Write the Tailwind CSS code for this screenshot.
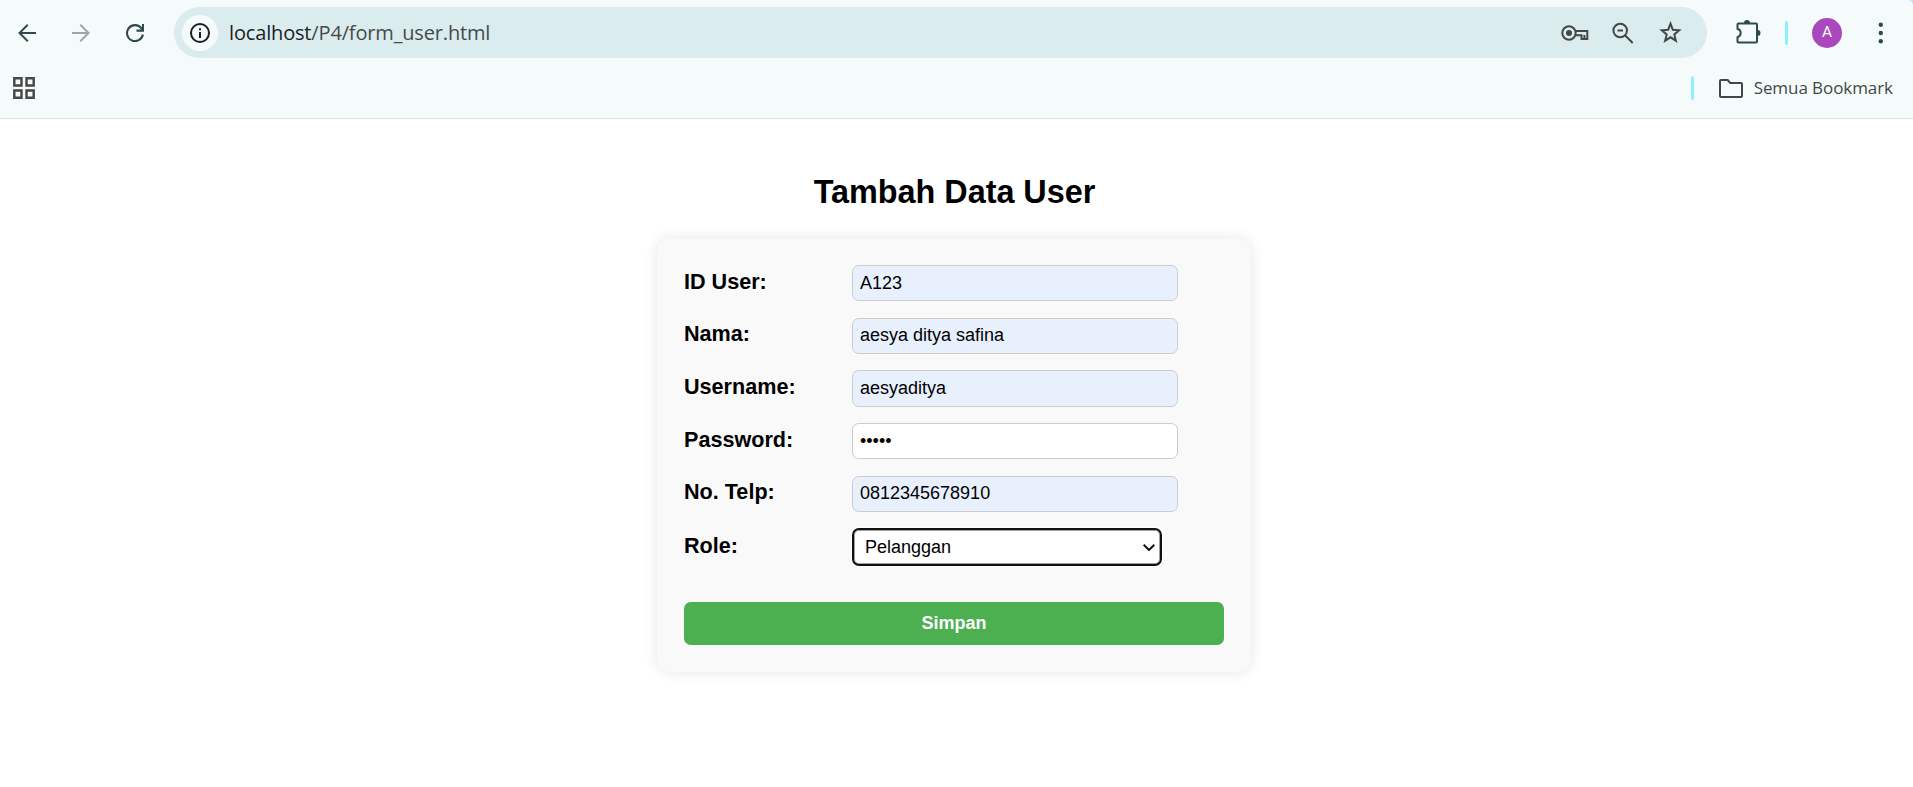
<!DOCTYPE html>
<html lang="id">
<head>
<meta charset="utf-8">
<title>Tambah Data User</title>
<script src="https://cdn.jsdelivr.net/npm/@tailwindcss/browser@4"></script>
</head>
<body class="w-[1913px] h-[787px] overflow-hidden bg-white font-['Liberation_Sans',Arial,sans-serif] text-black">
<header class="h-[119px] bg-[#f5fbfb] border-b border-[#d3e3e6] font-['Open_Sans','Segoe_UI',sans-serif] relative">
  <div class="absolute right-0 top-0 size-[5px] bg-[radial-gradient(circle_at_0_100%,#f5fbfb_4.5px,#c5e4e6_5px)]"></div>
  <div class="flex items-center h-[65px] text-[#2f4a4f]">
    <svg class="ml-[18px] size-[18px] shrink-0" viewBox="0 0 18 18" fill="none" stroke="currentColor" stroke-width="2"><path d="M18 9H1.5M9.800 .8L1.500 9l8.300 8.200"/></svg>
    <svg class="ml-9 size-[18px] shrink-0 text-[#9fa5a6]" viewBox="0 0 18 18" fill="none" stroke="currentColor" stroke-width="2"><path d="M0 9h16.5M8.300 .8L16.500 9l-8.200 8.200"/></svg>
    <svg class="ml-9 size-[18px] shrink-0" viewBox="0 0 18 18" fill="none" stroke="currentColor" stroke-width="2.100"><path d="M16.900 10.500A8 8 0 1 1 15.500 4.400L16.800 6M17 0v6.600H10.500"/></svg>
    <div class="ml-[30px] flex items-center w-[1533px] h-[51px] rounded-full bg-[#daecee] shrink-0">
      <span class="ml-2 size-9 rounded-full bg-[#f5fbfb] flex items-center justify-center text-[#1b1e1f]">
        <svg class="size-5" viewBox="0 0 20 20" fill="none" stroke="currentColor" stroke-width="2"><circle cx="10" cy="10" r="9"/><path d="M10 9v6M10 5.2v2"/></svg>
      </span>
      <span class="ml-[11px] text-[20px] leading-none tracking-[-0.16px] text-[#444b4d]"><span class="text-[#1b1e1f]">localhost</span>/P4/form_user.html</span>
      <span class="ml-auto flex items-center text-[#444746] mr-[24px]">
        <svg class="w-[28px] h-[16px]" viewBox="0 0 28 16" fill="none" stroke="currentColor" stroke-width="2"><circle cx="8" cy="8" r="6.7"/><circle cx="8" cy="8" r="3" fill="currentColor" stroke="none"/><path d="M14.200 6H26.300V14H20.500V10.300H14.200M23.400 10v3.500"/></svg>
        <svg class="ml-[23px] size-[22px]" viewBox="0 0 22 22" fill="none" stroke="currentColor" stroke-width="2"><circle cx="8.200" cy="8.500" r="6.8"/><path d="M13 13.300L20.700 21M5.500 8.500h5.500"/></svg>
        <svg class="ml-[25px] mr-px size-[23px]" viewBox="0 0 23 23" fill="none" stroke="currentColor" stroke-width="2"><path d="M11.5 2.700l2.300 6 6.400.5-4.900 4.200 1.600 6.300-5.400-3.400-5.400 3.400 1.600-6.300L2.800 9.200l6.400-.5z"/></svg>
      </span>
    </div>
    <svg class="ml-[28px] w-[26px] h-[25px] shrink-0" viewBox="0 0 26 25" fill="none" stroke="currentColor" stroke-width="2"><path d="M4 3.500h17a1 1 0 0 1 1 1v17a1 1 0 0 1-1 1H3.500a1 1 0 0 1-1-1V17.200C4.500 16.500 5.700 15 5.700 13S4.500 9.500 2.500 8.800V4.500a1 1 0 0 1 1-1z"/><path d="M9 3a3 3 0 0 1 6 0zM22.500 10a3 3 0 0 1 0 6z" fill="currentColor" stroke="none"/></svg>
    <span class="ml-[24px] w-[3px] h-6 rounded-full bg-[#8ef0fe]"></span>
    <span class="ml-[24px] size-[30px] rounded-full bg-[#ab47bc] text-white text-[15.500px] leading-none flex items-center justify-center font-[Roboto,sans-serif]">A</span>
    <svg class="ml-[36px] w-[5px] h-[22px]" viewBox="0 0 5 22" fill="currentColor"><circle cx="2.800" cy="2.700" r="2.200"/><circle cx="2.800" cy="11" r="2.200"/><circle cx="2.800" cy="19.300" r="2.200"/></svg>
  </div>
  <div class="flex items-center h-[46px] text-[#444746]">
    <svg class="ml-[13px] size-[22px]" viewBox="0 0 22 22" fill="none" stroke="currentColor" stroke-width="2.400"><path d="M1.300 1.300h7.200v7.200H1.300zM13.500 1.300h7.200v7.200h-7.200zM1.300 13.500h7.200v7.200H1.300zM13.500 13.500h7.200v7.200h-7.200z"/></svg>
    <span class="ml-auto w-[3px] h-6 rounded-full bg-[#8ef0fe]"></span>
    <svg class="ml-[25px] w-6 h-[19px]" viewBox="0 0 24 19" fill="none" stroke="currentColor" stroke-width="2"><path d="M2 1h6.700l2.500 3H22a1 1 0 0 1 1 1v12a1 1 0 0 1-1 1H2a1 1 0 0 1-1-1V2a1 1 0 0 1 1-1z"/></svg>
    <span class="ml-[11px] mr-[20px] mb-px text-[17px] tracking-[-0.07px] leading-none whitespace-nowrap">Semua Bookmark</span>
  </div>
</header>
<main class="flex flex-col items-center pr-[5px]">
  <h2 class="mt-[55px] ml-px text-[32.4px] leading-[37px] tracking-[-0.03px] font-bold">Tambah Data User</h2>
  <form class="mt-[27px] w-[594px] h-[434px] rounded-[13.5px] bg-[#f9f9f9] shadow-[0_0_13.5px_rgba(0,0,0,0.1)] px-[27px] pt-[27px]">
    <div class="flex h-[53px]"><label class="w-[168px] text-[21.6px] leading-[24px] pt-[5px] font-bold">ID User:</label><input class="w-[326px] h-9 rounded-[6.750px] border border-[#ccc] bg-[#e8f0fe] px-[7px] text-[18px]" value="A123"></div>
    <div class="flex h-[52px]"><label class="w-[168px] text-[21.6px] leading-[24px] pt-[4px] font-bold">Nama:</label><input class="w-[326px] h-9 rounded-[6.750px] border border-[#ccc] bg-[#e8f0fe] px-[7px] pb-[2px] text-[18px]" value="aesya ditya safina"></div>
    <div class="flex h-[53px]"><label class="w-[168px] text-[21.6px] leading-[24px] pt-[5px] font-bold">Username:</label><input class="w-[326px] h-[37px] rounded-[6.750px] border border-[#ccc] bg-[#e8f0fe] px-[7px] text-[18px]" value="aesyaditya"></div>
    <div class="flex h-[53px]"><label class="w-[168px] text-[21.6px] leading-[24px] pt-[5px] font-bold">Password:</label><input type="password" class="w-[326px] h-9 rounded-[6.750px] border border-[#ccc] bg-white px-[7px] text-[18px]" value="12345"></div>
    <div class="flex h-[52px]"><label class="w-[168px] text-[21.6px] leading-[24px] pt-[4px] font-bold">No. Telp:</label><input class="w-[326px] h-9 rounded-[6.750px] border border-[#ccc] bg-[#e8f0fe] px-[7px] pb-[2px] text-[18px]" value="0812345678910"></div>
    <div class="flex h-[74px]"><label class="w-[168px] text-[21.6px] leading-[24px] pt-[6px] font-bold">Role:</label>
      <div class="w-[310px] h-[38px] rounded-[7px] border-2 border-[#101010] shadow-[0_0_0_1px_#fff,inset_0_0_0_1px_#a0a0a0] bg-white pl-[11px] pr-[5px] text-[18px] flex items-center justify-between"><span>Pelanggan</span><svg class="w-3 h-[7px]" viewBox="0 0 12 7" fill="none" stroke="#101010" stroke-width="2"><path d="M.700 .800L6 6 11.300 .800"/></svg></div></div>
    <button type="button" class="w-full h-[43px] rounded-[6.750px] bg-[#4caf50] text-white text-[18px] font-bold">Simpan</button>
  </form>
</main>
</body>
</html>
